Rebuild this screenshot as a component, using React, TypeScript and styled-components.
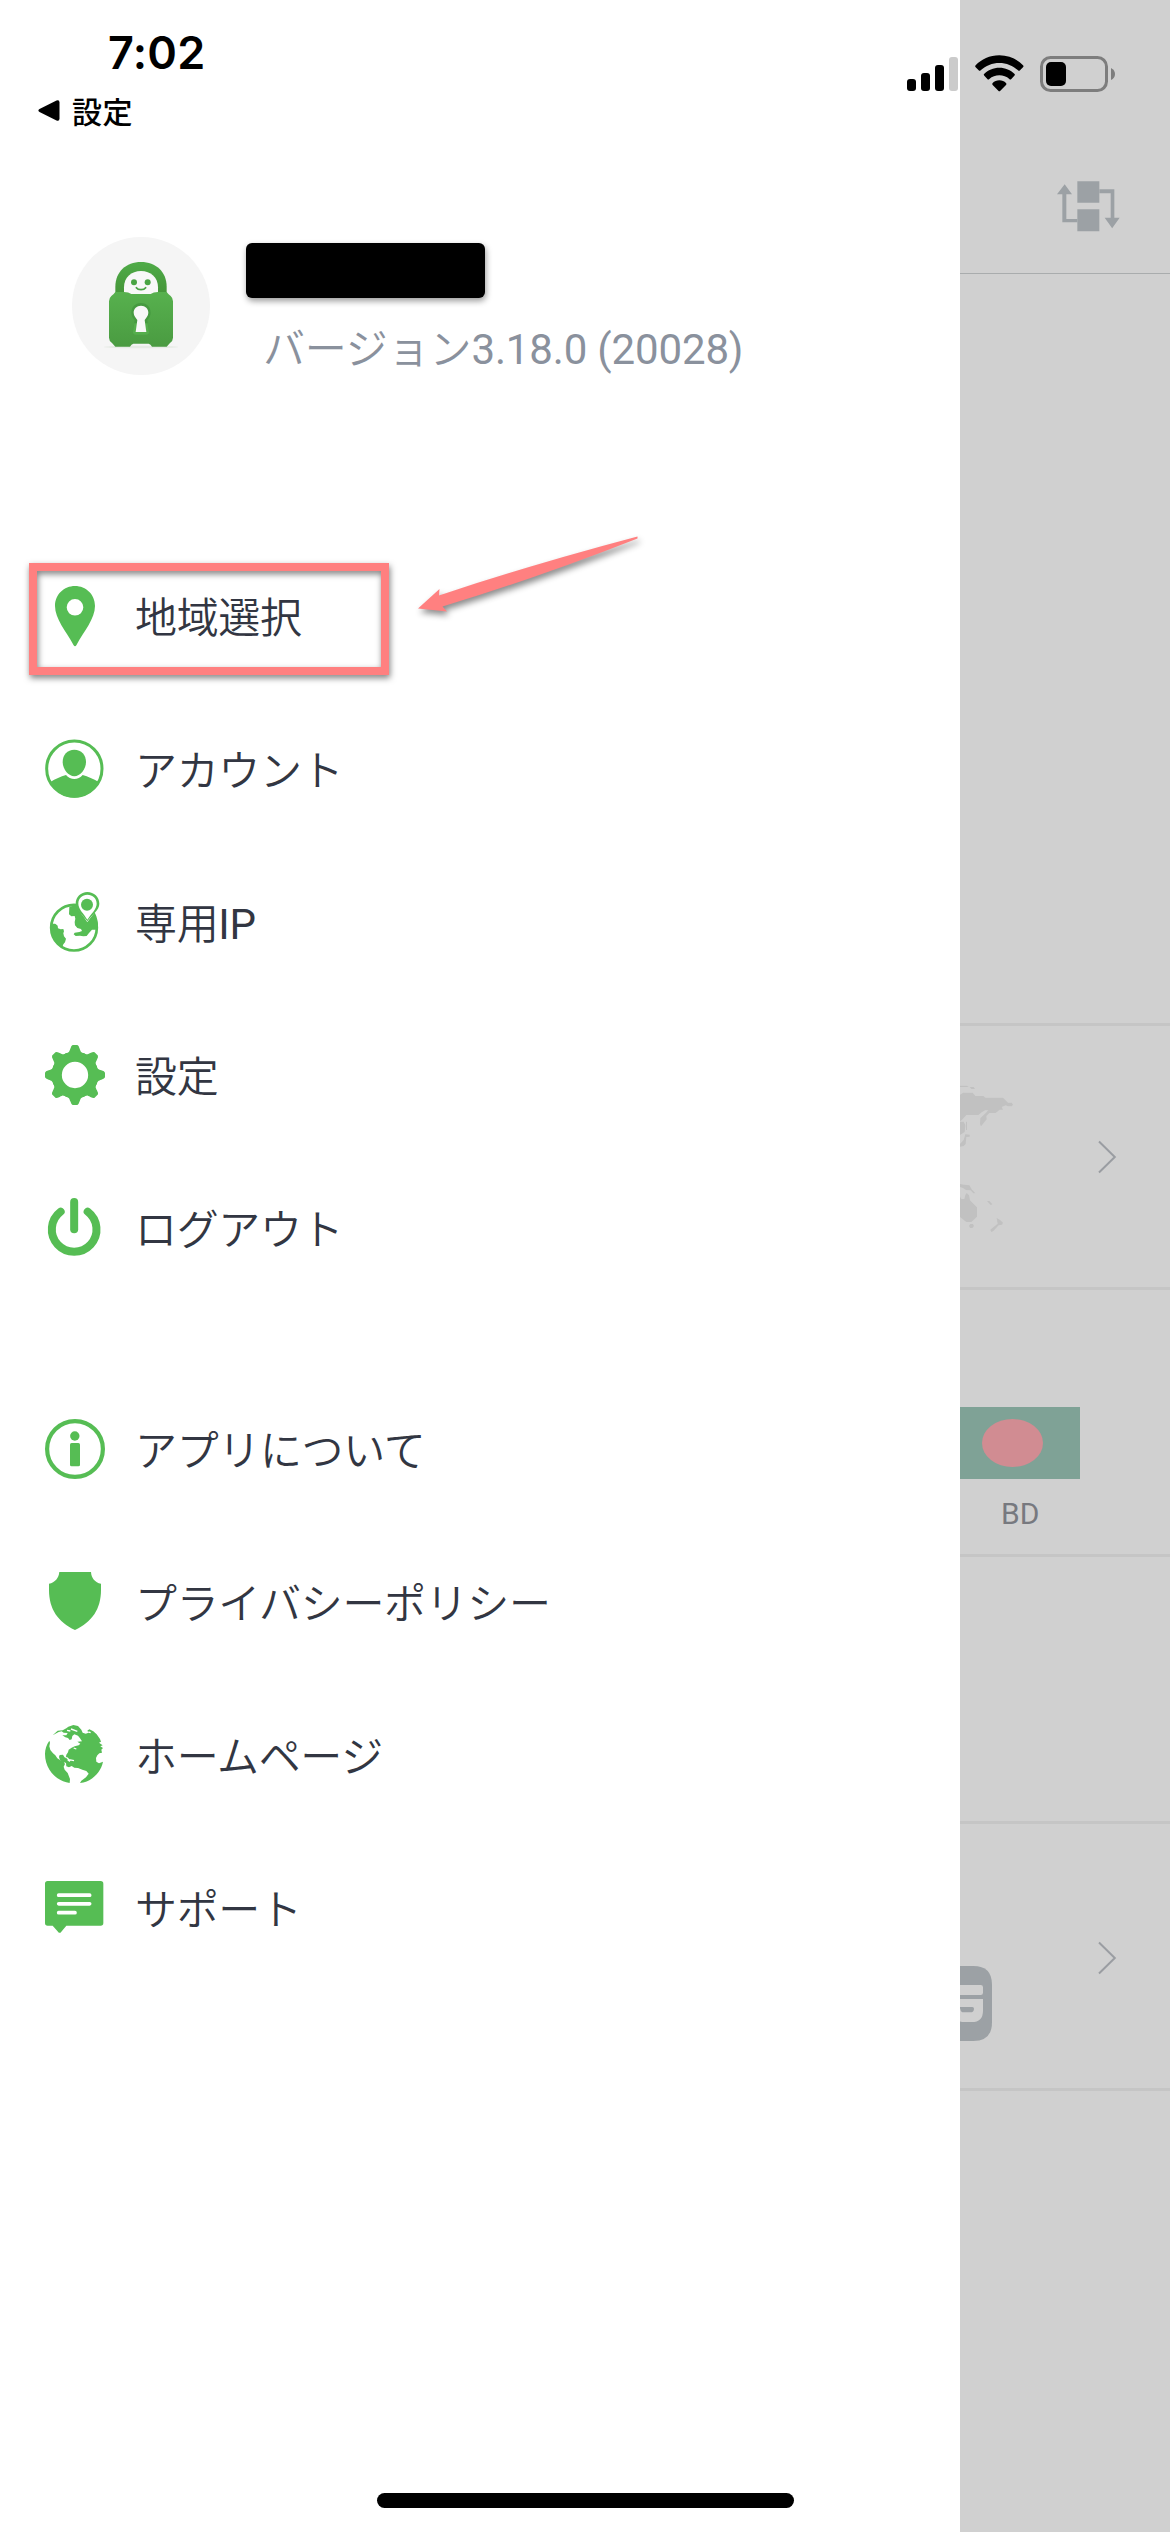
import React from "react";
import styled, { createGlobalStyle } from "styled-components";

const GREEN = "#56bd54";
const INK = "#323642";
const MUTED = "#8a919d";
const SLATE = "#9ca1a5";
const SCRIM = "#d0d0d0";

const GlobalStyle = createGlobalStyle`
  * { box-sizing: border-box; }
  body {
    margin: 0;
    background: ${SCRIM};
    font-family: Roboto, "Noto Sans CJK JP", sans-serif;
  }
`;

const Screen = styled.div`
  position: relative;
  display: grid;
  grid-template-columns: 960px 1fr;
  width: 1170px;
  height: 2532px;
  overflow: hidden;
`;

/* ---------- Status bar ---------- */

const StatusBar = styled.header`
  position: absolute;
  inset: 0 0 auto 0;
  display: flex;
  justify-content: space-between;
  padding: 30px 55px 0 38px;
  color: #000;
`;

const StatusLeft = styled.div`
  display: flex;
  flex-direction: column;
`;

const Clock = styled.div`
  padding-left: 70px;
  font: 600 45px/45px Inter, sans-serif;
  letter-spacing: 0.3px;
`;

const BackLink = styled.div`
  display: flex;
  align-items: center;
  gap: 12px;
  margin-top: 21px;
  font: 500 30px/30px "Noto Sans CJK JP", sans-serif;
`;

const BackLabel = styled.span`
  margin-top: -1px;
  letter-spacing: 0.4px;
`;

const StatusIcons = styled.div`
  display: flex;
  align-items: flex-start;
  padding-top: 25px;
`;

const Signal = styled.div`
  display: flex;
  align-items: flex-end;
  gap: 5px;
  height: 36px;
  margin-right: 17px;
`;

const SignalBar = styled.i<{ $h: number; $off?: boolean }>`
  width: 9px;
  height: ${(p) => p.$h}px;
  border-radius: 3px;
  background: ${(p) => (p.$off ? "#cbcbcb" : "#000")};
`;

const WifiGlyph = styled.svg`
  width: 49px;
  height: 37px;
  margin-right: 16px;
`;

const BatteryGlyph = styled.svg`
  width: 75px;
  height: 36px;
  margin-top: 1px;
`;

/* ---------- Drawer ---------- */

const Drawer = styled.aside`
  background: #fff;
  display: flex;
  flex-direction: column;
  padding-top: 237px;
`;

const Profile = styled.section`
  display: flex;
  gap: 36px;
  height: 349px;
  padding-left: 72px;
`;

const ProfileText = styled.div`
  display: flex;
  flex-direction: column;
  padding-top: 6px;
`;

const Redacted = styled.div`
  width: 239px;
  height: 55px;
  border-radius: 6px;
  background: #000;
  box-shadow: 1px 3px 6px rgba(0, 0, 0, 0.4);
`;

const Version = styled.div`
  margin: 24px 0 0 17px;
  font-size: 42px;
  line-height: 48px;
  letter-spacing: -0.15px;
  color: ${MUTED};
  white-space: nowrap;
`;

const Kana = styled.span`
  font-family: "Noto Sans CJK JP", sans-serif;
  font-weight: 350;
`;

const Menu = styled.nav`
  display: flex;
  flex-direction: column;
  gap: 161px;
  padding-left: 45px;
`;

const MenuGroup = styled.ul`
  display: flex;
  flex-direction: column;
  gap: 93px;
  margin: 0;
  padding: 0;
  list-style: none;
`;

const MenuItem = styled.li`
  display: flex;
  align-items: center;
  gap: 30px;
  height: 60px;
  color: ${INK};
  font-size: 42px;
  line-height: 60px;
  letter-spacing: -0.35px;
  white-space: nowrap;
`;

const MenuLabel = styled.span`
  padding-top: 1px;
`;

const Glyph = styled.svg`
  flex: none;
  width: 60px;
  height: 60px;
  fill: ${GREEN};
  overflow: visible;
`;

/* ---------- Dimmed home screen ---------- */

const Underlay = styled.main`
  display: flex;
  flex-direction: column;
  background: ${SCRIM};
`;

const TopBar = styled.div`
  display: flex;
  align-items: flex-end;
  justify-content: flex-end;
  height: 274px;
  padding: 0 50px 41px 0;
  border-bottom: 1px solid #a9acad;
`;

const Spacer = styled.div`
  height: 749px;
`;

const Tile = styled.div<{ $h?: number }>`
  display: flex;
  align-items: flex-start;
  justify-content: space-between;
  height: ${(p) => p.$h ?? 267}px;
  padding-right: 53px;
  border-top: 3px solid #c5c5c5;
`;

const Chevron = styled.svg<{ $top: number }>`
  width: 19px;
  height: 34px;
  margin-top: ${(p) => p.$top}px;
  fill: none;
  stroke: #9a9da2;
  stroke-width: 2;
`;

const Server = styled.div`
  display: flex;
  flex-direction: column;
  width: 120px;
  padding-top: 117px;
`;

const Flag = styled.div`
  display: flex;
  align-items: center;
  height: 72px;
  padding-left: 22px;
  background: #7fa296;
`;

const FlagDisc = styled.div`
  width: 61px;
  height: 48px;
  border-radius: 50%;
  background: #d18c92;
`;

const ServerCode = styled.div`
  padding: 17px 0 0 41px;
  font-size: 30px;
  line-height: 36px;
  color: #77797f;
`;

/* ---------- Overlays ---------- */

const Highlight = styled.div`
  position: absolute;
  left: 29px;
  top: 563px;
  width: 360px;
  height: 112px;
  border: 8.5px solid #ff8080;
  filter: drop-shadow(1px 3px 3px rgba(0, 0, 0, 0.5));
`;

const Pointer = styled.svg`
  position: absolute;
  left: 410px;
  top: 528px;
  width: 240px;
  height: 100px;
  fill: #ff8080;
  filter: drop-shadow(2px 4px 3px rgba(0, 0, 0, 0.45));
`;

const HomeIndicator = styled.div`
  position: absolute;
  left: 377px;
  bottom: 24px;
  width: 417px;
  height: 15px;
  border-radius: 8px;
  background: #000;
`;

/* ---------- Icons ---------- */

const PinIcon = () => (
  <Glyph viewBox="0 0 60 60">
    <path
      fillRule="evenodd"
      d="M30 0C41 0 50 8.500 50 20C50 33 39 45 31.500 59Q30 61.500 28.500 59C21 45 10 33 10 20C10 8.500 19 0 30 0ZM30 13A8.300 8.300 0 1 0 30 29.600A8.300 8.300 0 1 0 30 13Z"
    />
  </Glyph>
);

const AccountIcon = () => (
  <Glyph viewBox="75 87 180 180">
    <circle cx="163" cy="176" r="83" fill="none" stroke={GREEN} strokeWidth="9" />
    <path d="M163 119C184 119 198 134 198 156C198 178 180 199 163 199C146 199 128 178 128 156C128 134 142 119 163 119Z" />
    <path d="M91 216C106 207 122 200 138 195C151 211 175 211 188 195C204 200 220 207 236 216C222 246 194 263 163 263C132 263 104 246 91 216Z" />
  </Glyph>
);

const DedicatedIcon = () => (
  <Glyph viewBox="75 546 180 180">
    <circle cx="162" cy="653" r="68.500" fill="none" stroke={GREEN} strokeWidth="8" />
    <path d="M93 648C96 640 102 640 107 642L113 647L114 655L122 658L130 657L132 664L130 670L132 679L138 686L135 697L130 703L127 712C108 702 93 682 93 656Z" />
    <path d="M148 590L170 585L177 602L202 634L224 607C232 622 235 640 234 656L226 659L216 659L207 669L200 678L190 679L180 677L167 678L161 673L164 668L178 666L186 663L183 657L172 654L165 646L164 636L166 626L164 618L154 619L147 613Z" />
    <path
      d="M202 549C219 549 234 562 234 580C234 597 219 607 202 631C186 607 172 597 172 580C172 562 186 549 202 549Z"
      fill="#fff"
      stroke="#fff"
      strokeWidth="6"
    />
    <path
      fillRule="evenodd"
      d="M202 546C222 546 238 561 238 581C238 600 218 612 202 634C186 612 167 600 167 581C167 561 183 546 202 546ZM202 554C187 554 175 565 175 581C175 597 192 612 202 629C213 612 230 597 230 581C230 565 218 554 202 554Z"
    />
    <circle cx="201" cy="584" r="18" />
  </Glyph>
);

const TEETH = [0, 45, 90, 135, 180, 225, 270, 315];

const GearIcon = () => (
  <Glyph viewBox="75 75 180 180">
    <circle cx="165" cy="165" r="55" fill="none" stroke={GREEN} strokeWidth="31" />
    {TEETH.map((a) => (
      <path
        key={a}
        transform={`rotate(${a} 165 165)`}
        d="M137 114L138 100C147 99 148 94 151 86Q154 76 158 75H172Q176 76 179 86C182 94 183 99 192 100L193 114Z"
      />
    ))}
  </Glyph>
);

const PowerIcon = () => (
  <Glyph viewBox="75 534 180 180">
    <g fill="none" stroke={GREEN} strokeWidth="24" strokeLinecap="round">
      <path d="M162.500 546V628" />
      <path d="M122 575A67 67 0 1 0 203 575" />
    </g>
  </Glyph>
);

const InfoIcon = () => (
  <Glyph viewBox="0 0 60 60">
    <circle cx="30" cy="30" r="27.900" fill="none" stroke={GREEN} strokeWidth="4.200" />
    <circle cx="29.800" cy="17" r="4.700" />
    <rect x="25" y="24" width="10" height="23.300" rx="1.600" />
  </Glyph>
);

const ShieldIcon = () => (
  <Glyph viewBox="0 0 60 60">
    <path d="M14.300 0H46C46.300 6 50 10.500 56 11.800V18C56 37 47 50 30 58C13 50 4 37 4 18V11.800C10 10.500 13.800 6 14.300 0Z" />
  </Glyph>
);

const GlobeIcon = () => (
  <Glyph viewBox="75 105 180 180">
    <path d="M88 152L90 158L88 169L91 180L99 190L106 196L112 205L121 211L130 214L135 222L131 230L134 239L143 249L150 267L149 279C108 273 75 238 75 192C75 177 80 163 88 152Z" />
    <path d="M145 110L160 105L174 108L184 119L188 128L197 131L206 128L202 122L208 118L220 124L230 133L240 147L243 155L237 158L248 166L241 169L249 174L244 179L246 188L238 190L232 196L228 204L229 215L237 220L249 215C243 246 215 276 180 279L184 272L198 262L206 251L199 243L187 239L174 234L163 233L155 228L147 232L139 229L138 219L130 216L120 211L117 201L119 195L129 194L133 201L137 205L139 194L144 187L146 179L155 173L164 169L176 166L181 161L172 155L186 154L180 145L174 137L163 133L157 138L155 148L149 150L144 144L136 142L127 136L139 136L143 129L131 128L125 124L116 126L98 136L113 122L128 121L139 115Z" />
    <path
      d="M139 202L147 209L162 212M143 209L150 214M161 174L169 177M205 126L212 128M153 117L172 124M141 121L151 123"
      fill="none"
      stroke="#fff"
      strokeWidth="4"
    />
  </Glyph>
);

const ChatIcon = () => (
  <Glyph viewBox="75 564 180 180">
    <path d="M83 573H242Q250 573 250 581V699Q250 707 242 707H139L124 725Q119 732 114 725L98 707H83Q75 707 75 699V581Q75 573 83 573Z" />
    <path d="M116 615.500H209M116 641.500H209M116 668H165" stroke="#fff" strokeWidth="11" strokeLinecap="round" />
  </Glyph>
);

const RobotLock = () => (
  <svg width="138" height="138" viewBox="-54 -39 414 414">
    <defs>
      <linearGradient id="lockBody" x1="0" y1="0" x2="0" y2="1">
        <stop offset="0" stopColor="#57b14e" />
        <stop offset="1" stopColor="#4a9b41" />
      </linearGradient>
      <linearGradient id="lockShackle" x1="0" y1="0" x2="0" y2="1">
        <stop offset="0" stopColor="#4fab48" />
        <stop offset="1" stopColor="#459539" />
      </linearGradient>
    </defs>
    <circle cx="153" cy="168" r="207" fill="#f5f5f5" />
    <ellipse cx="153" cy="291" rx="112" ry="4" fill="#e6ebe5" />
    <path d="M76 135V110C76 66 108 36 153 36C198 36 230 66 230 110V135Z" fill="url(#lockShackle)" />
    <path d="M102 128V112C102 82 124 63 153 63C182 63 204 82 204 112V128L190 134H116Z" fill="#f8f8f8" />
    <path
      d="M76 126H102Q116 126 124 132H182Q190 126 204 126H230Q234 132 242 138Q249 144 249 154V263Q249 272 240 279L230 290H186Q182 282 176 281H130Q124 282 120 290H76L66 279Q57 272 57 263V154Q57 144 64 138Q72 132 76 126Z"
      fill="url(#lockBody)"
    />
    <path
      d="M153 159C171 159 182 172 182 188C182 198 177 205 172 210L177 245Q178 254 169 254H137Q128 254 129 245L134 210C129 205 124 198 124 188C124 172 135 159 153 159Z"
      fill="#469a40"
    />
    <path d="M133 220H173L177 245Q178 254 169 254H137Q128 254 129 245Z" fill="#55ae4c" />
    <path d="M153 167C166 167 175 176 175 188C175 197 168 204 164 210L169 246H137L142 210C138 204 131 197 131 188C131 176 140 167 153 167Z" fill="#f8f8f8" />
    <circle cx="132" cy="97" r="9" fill="#4aa544" />
    <circle cx="173" cy="97" r="9" fill="#4aa544" />
    <path d="M139 113Q143 119 153 119Q163 119 167 113" fill="none" stroke="#4aa544" strokeWidth="5" strokeLinecap="round" />
  </svg>
);

const WifiIcon = () => (
  <WifiGlyph viewBox="314 104 147 111">
    <path d="M387 105C416 105 441 117 458 135Q461 138 458 141L449 150Q446 153 443 150C428 136 408 128 387 128C366 128 346 136 331 150Q328 153 325 150L316 141Q313 138 316 135C333 117 358 105 387 105Z" />
    <path d="M387 142C405 142 421 149 432 160Q436 163 432 166L423 176Q420 179 417 176C409 169 398 165 387 165C376 165 365 169 357 176Q354 179 351 176L342 166Q338 163 342 160C353 149 369 142 387 142Z" />
    <path d="M387 180C395 180 402 183 407 188Q410 191 407 194L390 211Q387 214 384 211L367 194Q364 191 367 188C372 183 379 180 387 180Z" />
  </WifiGlyph>
);

const BatteryIcon = () => (
  <BatteryGlyph viewBox="0 0 75 36">
    <rect x="1.500" y="1.500" width="65" height="33" rx="9" fill="none" stroke="#7d7d7d" strokeWidth="3" />
    <rect x="6" y="6" width="20" height="24" rx="5" />
    <path d="M71 12Q75 14 75 18Q75 22 71 24Z" fill="#7d7d7d" />
  </BatteryGlyph>
);

const TileOrderIcon = () => (
  <svg width="63" height="51" viewBox="560 485 189 153" fill={SLATE}>
    <path d="M621 486H687V550H621ZM621 570H687V636H621Z" />
    <path d="M687 510H732V595H748L725.500 627L703 595H721V522H687Z" />
    <path d="M583 495L605 525H588V599H621V609H576V525H560Z" />
  </svg>
);

const MapFragment = styled.svg`
  width: 60px;
  height: 150px;
  margin-top: 58px;
  fill: #c1c1c1;
`;

const KeypadIcon = styled.svg`
  width: 32px;
  height: 75px;
  margin-top: 142px;
  overflow: hidden;
`;

/* ---------- Screen ---------- */

type Entry = { icon: React.ReactNode; label: string; latin?: string };

const primary: Entry[] = [
  { icon: <PinIcon />, label: "地域選択" },
  { icon: <AccountIcon />, label: "アカウント" },
  { icon: <DedicatedIcon />, label: "専用", latin: "IP" },
  { icon: <GearIcon />, label: "設定" },
  { icon: <PowerIcon />, label: "ログアウト" },
];

const secondary: Entry[] = [
  { icon: <InfoIcon />, label: "アプリについて" },
  { icon: <ShieldIcon />, label: "プライバシーポリシー" },
  { icon: <GlobeIcon />, label: "ホームページ" },
  { icon: <ChatIcon />, label: "サポート" },
];

const Group = ({ items }: { items: Entry[] }) => (
  <MenuGroup>
    {items.map((it) => (
      <MenuItem key={it.label}>
        {it.icon}
        <MenuLabel>
          <Kana>{it.label}</Kana>
          {it.latin}
        </MenuLabel>
      </MenuItem>
    ))}
  </MenuGroup>
);

const NextArrow = ({ top }: { top: number }) => (
  <Chevron viewBox="0 0 19 34" $top={top}>
    <path d="M1 1.500L16.800 17L1 32.500" />
  </Chevron>
);

export default function App() {
  return (
    <>
      <GlobalStyle />
      <Screen>
        <Drawer>
          <Profile>
            <RobotLock />
            <ProfileText>
              <Redacted />
              <Version>
                <Kana>バージョン</Kana>3.18.0 (20028)
              </Version>
            </ProfileText>
          </Profile>
          <Menu>
            <Group items={primary} />
            <Group items={secondary} />
          </Menu>
        </Drawer>

        <Underlay>
          <TopBar>
            <TileOrderIcon />
          </TopBar>
          <Spacer />
          <Tile $h={264}>
            <MapFragment viewBox="90 252 180 450">
              <path d="M90 257H111L116 261H90ZM119 261H131L135 267H124Z" />
              <path d="M90 284L100 278H128L136 288H160L166 293H219L234 308H245L249 314L245 319H234L227 316L215 321L219 329H209L197 339H178L169 348L170 358L153 379L150 372L151 355L165 341L175 331H165L155 337L145 345H109L96 359L90 364Z" />
              <path d="M90 365H101L106 376L104 396L90 405ZM108 365H111V390H108ZM106 403L119 404V410L109 411L107 432L101 438L90 440V432L101 420Z" />
              <path d="M90 552L102 554L118 556L126 569L136 580H130L122 571L108 570L99 564L90 561ZM90 590L94 597H103L106 585L110 579L117 586L120 601L141 622V650L124 666H109L90 651Z" />
              <path d="M121 672H129L132 678L127 684H120L117 678ZM171 603H178L187 613L182 615ZM200 654L210 660L219 668L216 674L206 676L190 693L184 696L181 689L203 671Z" />
            </MapFragment>
            <NextArrow top={114} />
          </Tile>
          <Tile>
            <Server>
              <Flag>
                <FlagDisc />
              </Flag>
              <ServerCode>BD</ServerCode>
            </Server>
          </Tile>
          <Tile />
          <Tile>
            <KeypadIcon viewBox="90 498 96 225">
              <path d="M60 498H130Q186 498 186 554V667Q186 723 130 723H60Z" fill={SLATE} />
              <path d="M80 555H152Q159 555 159 562V578Q159 585 152 585H80ZM80 597H159V632Q159 666 125 666H104Q90 666 80 660Z" fill={SCRIM} />
              <path d="M80 621H127Q132 621 132 626Q132 637 121 637H102Q91 637 91 626L80 625Z" fill={SLATE} />
            </KeypadIcon>
            <NextArrow top={117} />
          </Tile>
          <Tile />
        </Underlay>

        <Highlight />
        <Pointer viewBox="410 528 240 100">
          <path d="M418 608.500L439.500 589L439 595.500Q530 565 637.500 536.500V538.500Q540 577 442.500 606.500L447 611.500Z" />
        </Pointer>

        <StatusBar>
          <StatusLeft>
            <Clock>7:02</Clock>
            <BackLink>
              <svg width="22" height="21" viewBox="0 0 22 21">
                <path d="M1.500 9L18.500 0.600Q21.500 -0.500 21.500 2.500V18.500Q21.500 21.500 18.500 20.400L1.500 12Q-0.800 10.500 1.500 9Z" />
              </svg>
              <BackLabel>設定</BackLabel>
            </BackLink>
          </StatusLeft>
          <StatusIcons>
            <Signal>
              <SignalBar $h={12} />
              <SignalBar $h={18} />
              <SignalBar $h={26} />
              <SignalBar $h={34} $off />
            </Signal>
            <WifiIcon />
            <BatteryIcon />
          </StatusIcons>
        </StatusBar>
        <HomeIndicator />
      </Screen>
    </>
  );
}
